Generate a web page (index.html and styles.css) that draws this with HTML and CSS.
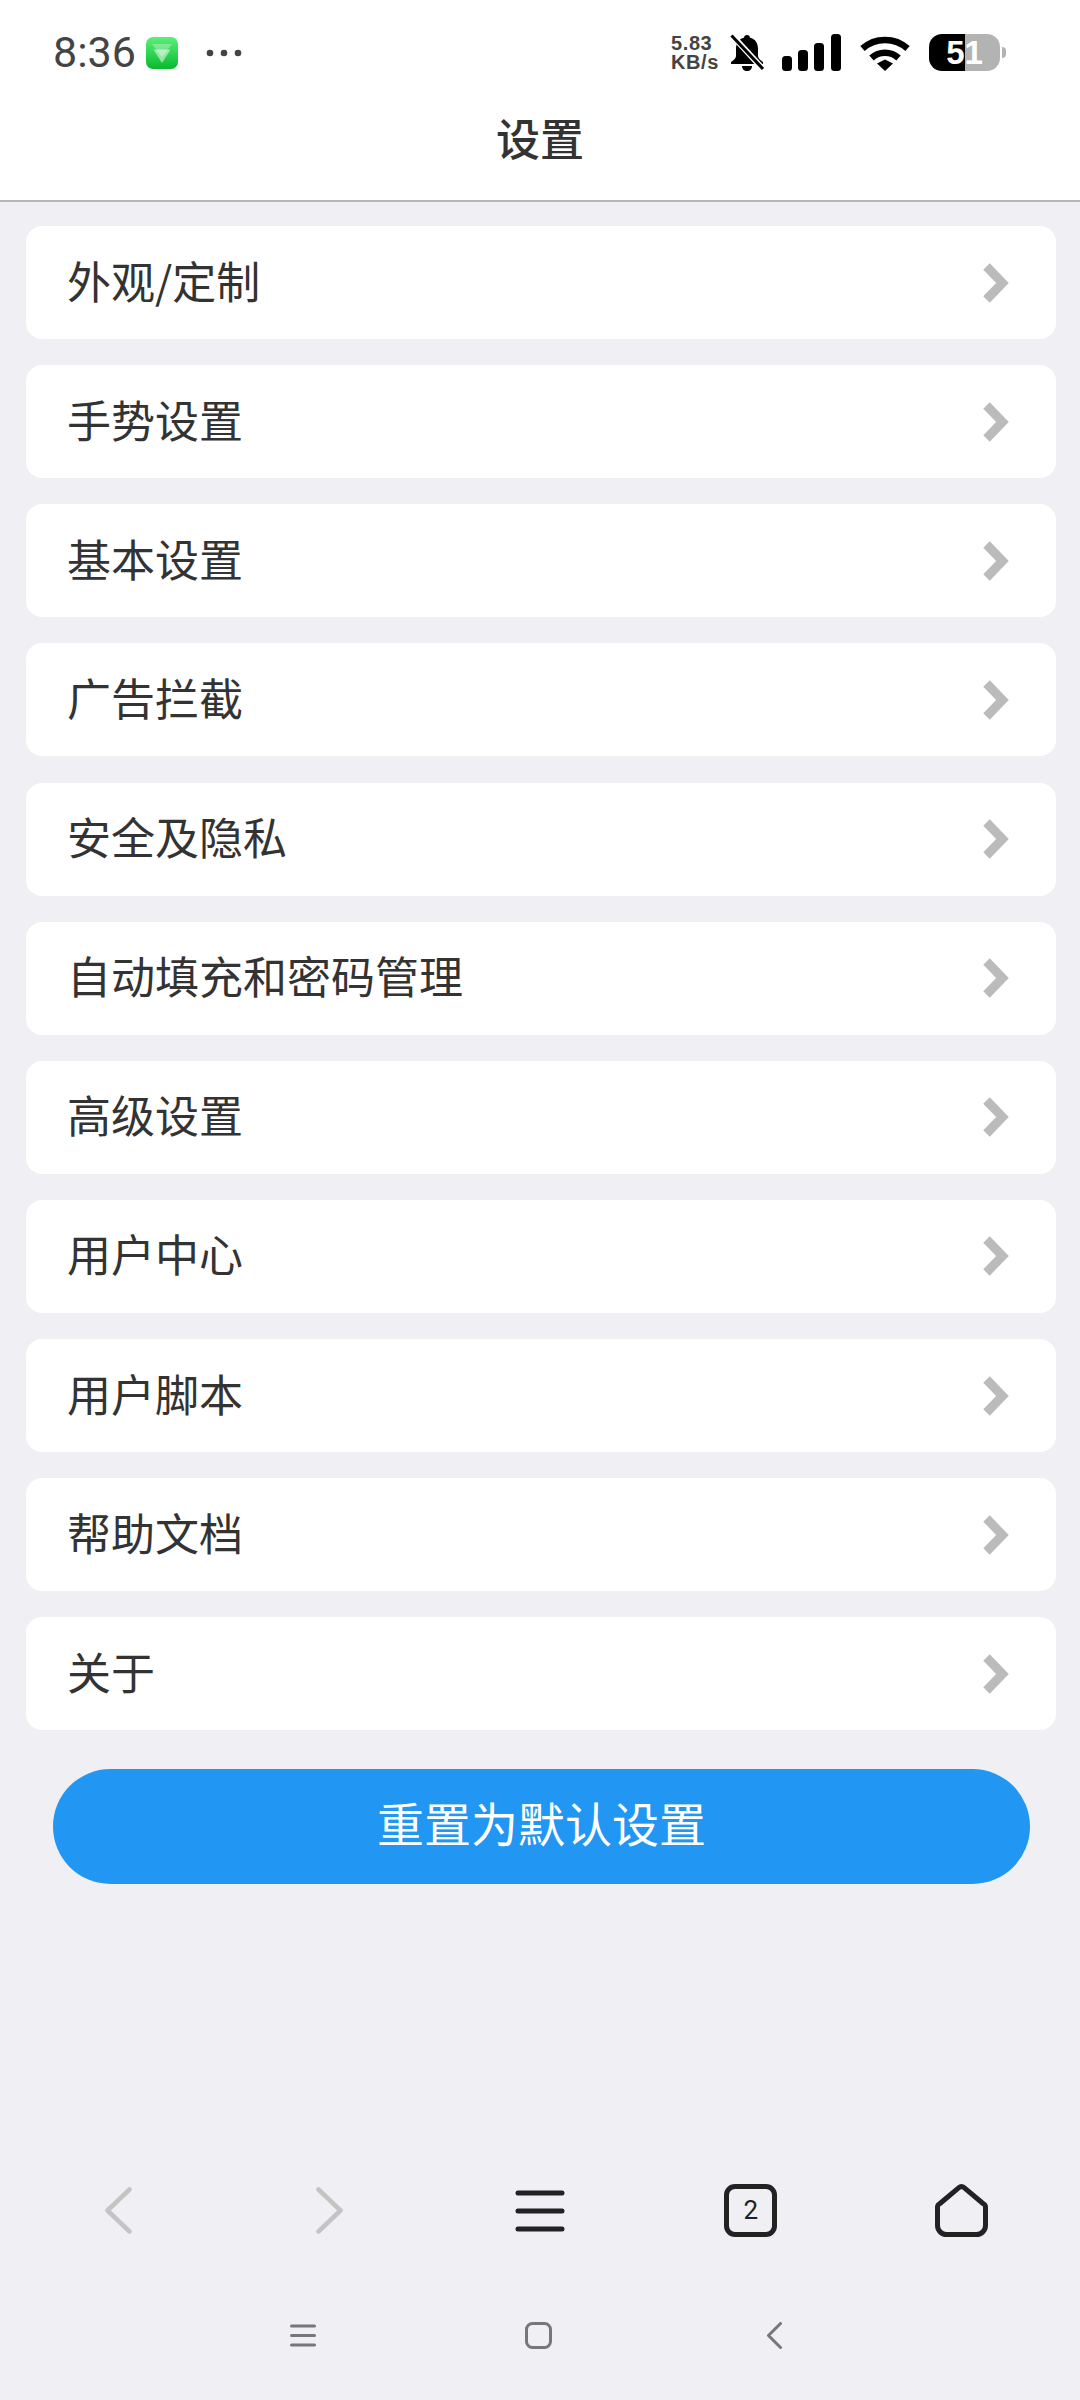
FILE: index.html
```html
<!DOCTYPE html>
<html lang="zh-CN">

<head>
  <meta charset="UTF-8">
  <meta name="viewport" content="width=device-width, initial-scale=1.0">
  <title>设置</title>
  <link rel="stylesheet" href="styles.css">
</head>

<body>
  <svg class="sprite" width="0" height="0">
    <symbol id="chevron" viewBox="0 0 26 40">
      <polyline points="3.500,3.500 19.500,20 3.500,36.500" fill="none" stroke="#bbbbbb" stroke-width="9" />
    </symbol>
  </svg>

  <div class="page">
    <header class="top">
      <div class="status">
        <div class="status-left">
          <span class="time">8:36</span>
          <svg class="app-icon" width="32" height="32" viewBox="0 0 32 32">
            <defs>
              <linearGradient id="green" x1="0" y1="0" x2="0" y2="1">
                <stop offset="0" stop-color="#5cf07a" />
                <stop offset="1" stop-color="#08b92f" />
              </linearGradient>
            </defs>
            <rect width="32" height="32" rx="7" fill="url(#green)" />
            <polygon points="6,7 26,7 16,20" fill="#ffffff" opacity="0.3" />
            <polygon points="7.500,12.500 24.500,12.500 16,26" fill="#ffffff" opacity="0.5" />
          </svg>
          <svg class="dots" width="36" height="8" viewBox="0 0 36 8">
            <circle cx="4" cy="4" r="3.300" fill="#444444" />
            <circle cx="18" cy="4" r="3.300" fill="#444444" />
            <circle cx="32" cy="4" r="3.300" fill="#444444" />
          </svg>
        </div>
        <div class="status-right">
          <div class="speed">5.83<br>KB/s</div>
          <svg class="bell" width="34" height="38" viewBox="0 0 34 38">
            <path d="M17 1c-1.800 0-3 1.200-3 2.800C8.500 5 6 9.500 6 15v7c0 2-2 4-5 6v2h32v-2c-3-2-5-4-5-6v-7c0-5.500-2.500-10-8-11.200C20 2.200 18.800 1 17 1z" fill="#000000" />
            <path d="M12 32h10c0 3-2 5-5 5s-5-2-5-5z" fill="#000000" />
            <line x1="-1" y1="-2" x2="33" y2="35" stroke="#ffffff" stroke-width="6" />
            <line x1="1.500" y1="1.500" x2="33" y2="35" stroke="#000000" stroke-width="3" />
          </svg>
          <svg class="signal" width="59" height="37" viewBox="0 0 59 37">
            <rect x="0" y="22" width="10" height="15" rx="3.500" fill="#000000" />
            <rect x="16" y="16" width="10" height="21" rx="3.500" fill="#000000" />
            <rect x="32" y="9" width="10" height="28" rx="3.500" fill="#000000" />
            <rect x="49" y="0" width="10" height="37" rx="3.500" fill="#000000" />
          </svg>
          <svg class="wifi" width="50" height="36" viewBox="0 0 50 36">
            <path d="M2.500 13.500C15 2 35 2 47.500 13.500" fill="none" stroke="#000000" stroke-width="6.500" />
            <path d="M11.500 23C19 16 31 16 38.500 23" fill="none" stroke="#000000" stroke-width="6.500" />
            <polygon points="25,36 17,28.500 25,24.500 33,28.500" fill="#000000" />
          </svg>
          <div class="battery">51</div>
        </div>
      </div>
      <h1 class="title">设置</h1>
    </header>

    <main class="settings">
      <a class="row"><span>外观/定制</span><svg class="arrow"><use href="#chevron" /></svg></a>
      <a class="row"><span>手势设置</span><svg class="arrow"><use href="#chevron" /></svg></a>
      <a class="row"><span>基本设置</span><svg class="arrow"><use href="#chevron" /></svg></a>
      <a class="row"><span>广告拦截</span><svg class="arrow"><use href="#chevron" /></svg></a>
      <a class="row"><span>安全及隐私</span><svg class="arrow"><use href="#chevron" /></svg></a>
      <a class="row"><span>自动填充和密码管理</span><svg class="arrow"><use href="#chevron" /></svg></a>
      <a class="row"><span>高级设置</span><svg class="arrow"><use href="#chevron" /></svg></a>
      <a class="row"><span>用户中心</span><svg class="arrow"><use href="#chevron" /></svg></a>
      <a class="row"><span>用户脚本</span><svg class="arrow"><use href="#chevron" /></svg></a>
      <a class="row"><span>帮助文档</span><svg class="arrow"><use href="#chevron" /></svg></a>
      <a class="row"><span>关于</span><svg class="arrow"><use href="#chevron" /></svg></a>
    </main>

    <button class="reset">重置为默认设置</button>

    <nav class="toolbar">
      <div class="tool">
        <svg width="27" height="47" viewBox="0 0 27 47">
          <polyline points="24.500,2.500 2.500,23.500 24.500,44.500" fill="none" stroke="#c4c4c4" stroke-width="4.500" stroke-linecap="round" stroke-linejoin="round" />
        </svg>
      </div>
      <div class="tool">
        <svg width="27" height="47" viewBox="0 0 27 47">
          <polyline points="2.500,2.500 24.500,23.500 2.500,44.500" fill="none" stroke="#c4c4c4" stroke-width="4.500" stroke-linecap="round" stroke-linejoin="round" />
        </svg>
      </div>
      <div class="tool">
        <svg width="50" height="42" viewBox="0 0 50 42">
          <path d="M3 3H47M3 21H47M3 39H47" fill="none" stroke="#222222" stroke-width="5" stroke-linecap="round" />
        </svg>
      </div>
      <div class="tool">
        <div class="tabs">2</div>
      </div>
      <div class="tool">
        <svg width="53" height="53" viewBox="0 0 53 53">
          <path d="M26.500 2.500a3.500 3.500 0 0 1 2.300 .9L48 19.500a4 4 0 0 1 2.500 3.500V41.500a9 9 0 0 1-9 9H11.500a9 9 0 0 1-9-9V23a4 4 0 0 1 2.500-3.500L24.200 3.400a3.500 3.500 0 0 1 2.300-.9z" fill="none" stroke="#222222" stroke-width="5" stroke-linejoin="round" />
        </svg>
      </div>
    </nav>

    <nav class="sysnav">
      <svg width="26" height="23" viewBox="0 0 26 23">
        <path d="M1.500 2H24.500M1.500 11.500H24.500M1.500 21H24.500" fill="none" stroke="#777777" stroke-width="3" stroke-linecap="round" />
      </svg>
      <svg class="sys-home" width="27" height="27" viewBox="0 0 27 27">
        <rect x="1.500" y="1.500" width="24" height="24" rx="6" fill="none" stroke="#777777" stroke-width="3" />
      </svg>
      <svg class="sys-back" width="15" height="27" viewBox="0 0 15 27">
        <polyline points="13.500,1.500 1.500,13.500 13.500,25.500" fill="none" stroke="#777777" stroke-width="3" stroke-linecap="round" stroke-linejoin="round" />
      </svg>
    </nav>
  </div>
</body>

</html>
```

FILE: styles.css
```css
* {
  box-sizing: border-box;
}

body {
  margin: 0;
  background: #efeff4;
  color: #333333;
  font-family: "Noto Sans CJK SC", "Noto Sans", sans-serif;
}

.sprite {
  display: block;
}

.page {
  display: flex;
  flex-direction: column;
  height: 2400px;
}

/* top bar */
.top {
  height: 202px;
  padding-top: 34px;
  background: #ffffff;
  border-bottom: 2px solid #b5b5b5;
}

.status {
  display: flex;
  justify-content: space-between;
  align-items: center;
  height: 37px;
  padding: 0 80px 0 53px;
}

.status-left,
.status-right {
  display: flex;
  align-items: center;
}

.time {
  font-family: Roboto, sans-serif;
  font-size: 43px;
  line-height: 37px;
  color: #444444;
}

.app-icon {
  margin-left: 10px;
}

.dots {
  margin-left: 28px;
}

.speed {
  width: 59px;
  font-family: "Liberation Sans", sans-serif;
  font-size: 20px;
  font-weight: 700;
  letter-spacing: 0.6px;
  line-height: 19px;
  color: #444444;
}

.bell {
  margin-right: 18px;
}

.signal {
  margin-right: 19px;
}

.wifi {
  margin-right: 19px;
}

.battery {
  position: relative;
  width: 71px;
  height: 37px;
  border-radius: 13px;
  background: linear-gradient(90deg, #000000 51%, #b3b3b3 51%);
  color: #ffffff;
  font-family: "Liberation Sans", sans-serif;
  font-size: 33px;
  font-weight: 700;
  line-height: 37px;
  text-align: center;
}

.battery::after {
  content: "";
  position: absolute;
  top: 13px;
  right: -6px;
  width: 4px;
  height: 11px;
  border-radius: 0 4px 4px 0;
  background: #b3b3b3;
}

.title {
  margin: 0;
  height: 128px;
  padding-top: 8px;
  font-size: 44px;
  font-weight: 500;
  line-height: 116px;
  text-align: center;
}

/* list */
.settings {
  display: flex;
  flex-direction: column;
  gap: 26.15px;
  padding: 24px 24px 0 26px;
}

.row {
  display: flex;
  justify-content: space-between;
  align-items: center;
  height: 113px;
  padding: 0 47px 0 41px;
  border-radius: 16px;
  background: #ffffff;
  font-size: 44px;
}

.row span {
  padding-bottom: 6px;
}

.arrow {
  width: 26px;
  height: 40px;
}

.reset {
  display: block;
  height: 115px;
  margin: 39px 50px 0 53px;
  padding-bottom: 12px;
  border: 0;
  border-radius: 58px;
  background: #2196f3;
  color: #ffffff;
  font-family: inherit;
  font-size: 47px;
}

/* bottom bars */
.toolbar {
  display: grid;
  grid-template-columns: repeat(5, 1fr);
  align-items: center;
  height: 121px;
  margin-top: auto;
  padding: 0 13px;
}

.tool {
  display: flex;
  justify-content: center;
  align-items: center;
}

.tabs {
  width: 53px;
  height: 53px;
  border: 5px solid #222222;
  border-radius: 11px;
  color: #222222;
  font-family: Roboto, sans-serif;
  font-size: 26px;
  line-height: 43px;
  text-align: center;
}

.sysnav {
  display: flex;
  align-items: center;
  height: 129px;
  padding-left: 290px;
}

.sys-home {
  margin-left: 209px;
}

.sys-back {
  margin-left: 215px;
}
```
